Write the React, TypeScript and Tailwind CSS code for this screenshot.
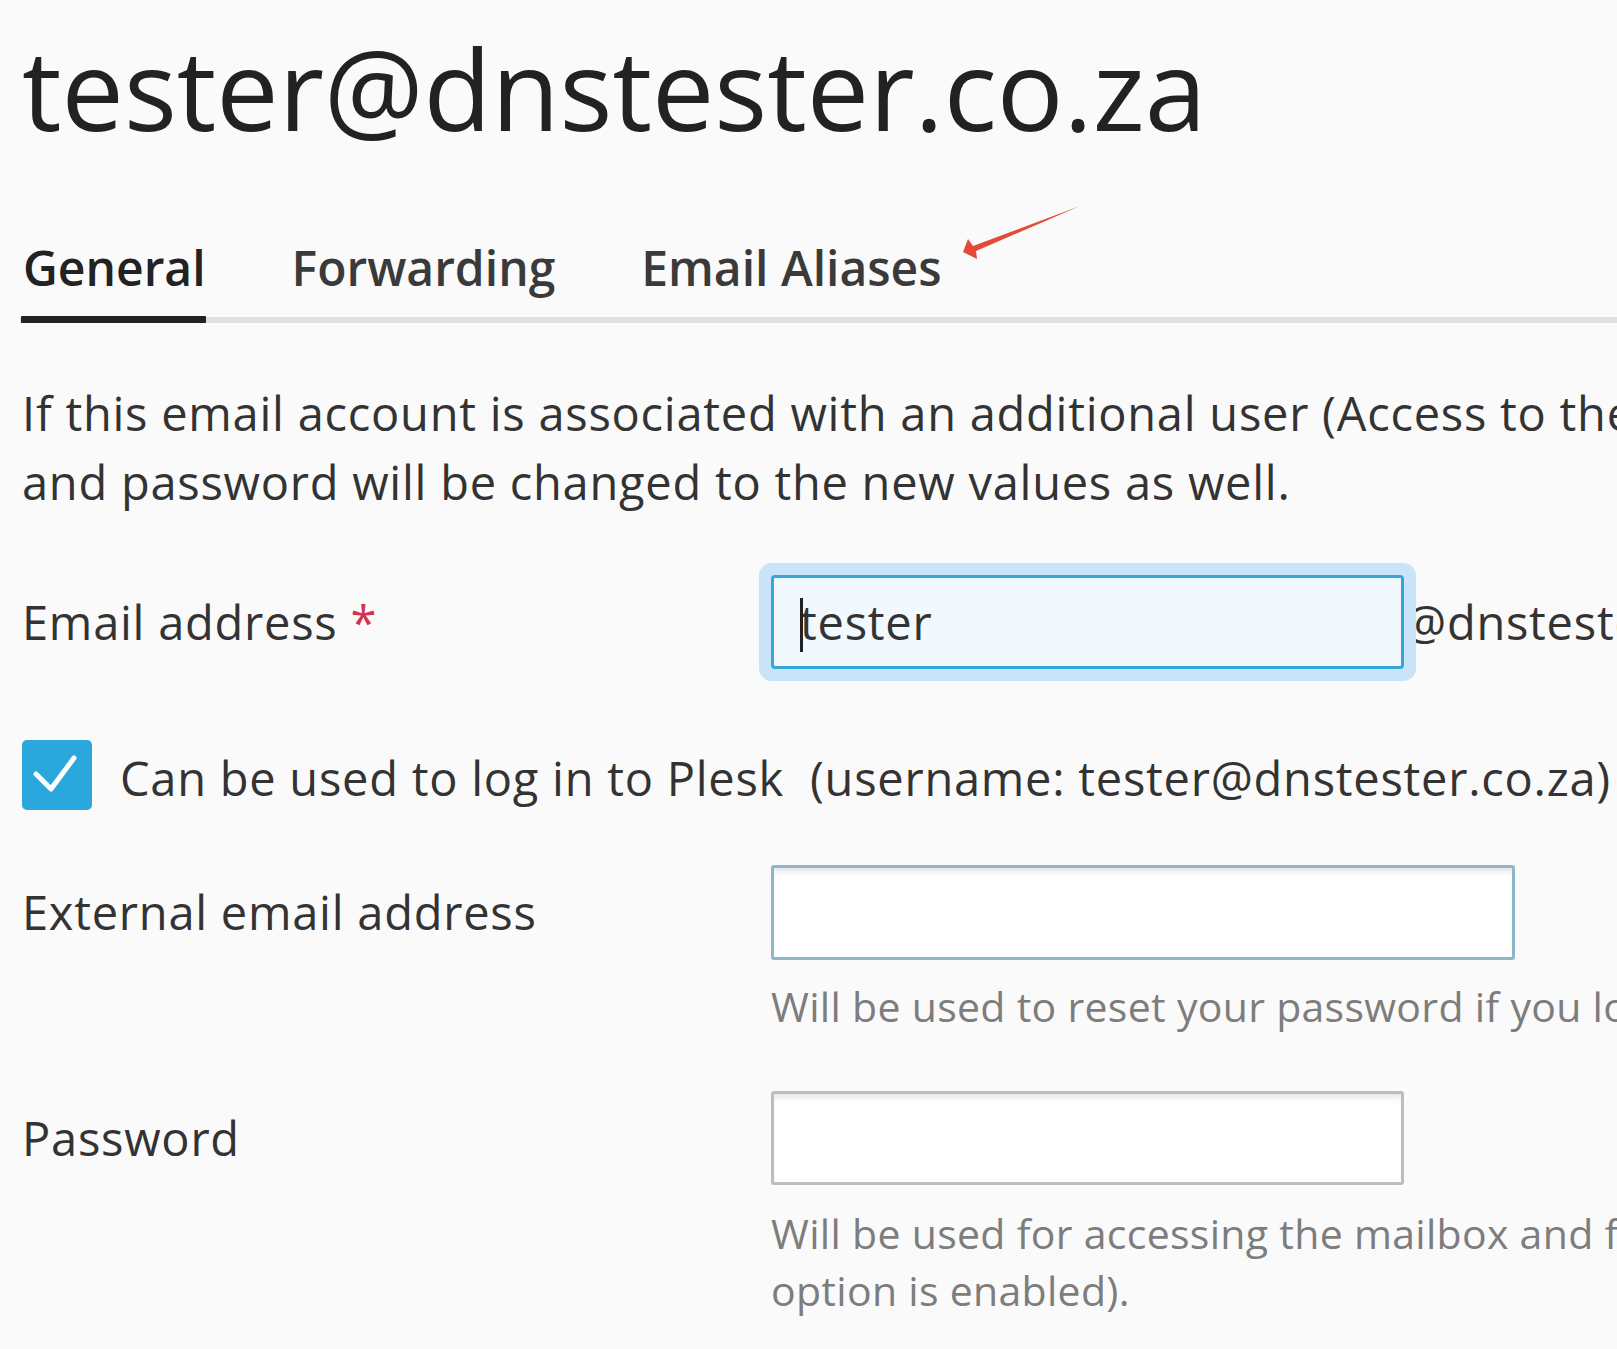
// Plesk mailbox settings — General tab (zoomed)

const TABS = [
  { id: "general", label: "General" },
  { id: "forwarding", label: "Forwarding" },
  { id: "aliases", label: "Email Aliases" },
];

function Tabs({ active }: { active: string }) {
  return (
    <div className="relative mt-[100px]">
      <div className="flex gap-[86px] pl-[1px]">
        {TABS.map((t) => {
          const isActive = t.id === active;
          return (
            <div key={t.id} className="relative">
              <span
                className={`block text-[48px] leading-none font-semibold pb-[24px] ${
                  isActive ? "text-[#222]" : "text-[#3a3a3a]"
                }`}
              >
                {t.label}
              </span>
              {isActive && <div className="absolute left-[-2px] right-0 bottom-[-7px] h-[7px] bg-[#222] rounded-[1px] z-10" />}
            </div>
          );
        })}
      </div>
      <div className="h-[6px] bg-[#e0e0e0] -mr-[22px] -ml-[2px] mt-[1px]" />
    </div>
  );
}

function FieldLabel({ children }: { children: React.ReactNode }) {
  return <div className="w-[749px] shrink-0 text-[47px] tracking-[0.75px] leading-[69px] text-[#333]">{children}</div>;
}

function Hint({ children }: { children: React.ReactNode }) {
  return <div className="ml-[749px] text-[41px] tracking-[0.3px] leading-[57px] text-[#7d7d7d] whitespace-nowrap">{children}</div>;
}

export default function App() {
  return (
    <div
      className="relative min-h-screen w-screen overflow-hidden bg-[#fafafa] pl-[22px] pt-[33px]"
      style={{ fontFamily: "'Open Sans', 'Noto Sans', sans-serif" }}
    >
      <h1 className="text-[111px] leading-none text-[#222] font-normal whitespace-nowrap">tester@dnstester.co.za</h1>

      <Tabs active="general" />

      {/* annotation arrow */}
      <svg className="absolute left-0 top-0 pointer-events-none" width="1617" height="400" viewBox="0 0 1617 400">
        <polygon points="963,252 968,239 973,246 1080,206 976,251 977,259" fill="#e34a38" />
      </svg>

      <p className="mt-[56px] text-[47px] tracking-[0.75px] leading-[69px] text-[#333] whitespace-nowrap">
        If this email account is associated with an additional user (Access to the Customer Panel option is enabled), the user's login
        <br />
        and password will be changed to the new values as well.
      </p>

      {/* Email address */}
      <div className="mt-[58px] flex items-center">
        <FieldLabel>
          Email address <span className="text-[#d3334b]">*</span>
        </FieldLabel>
        <div className="relative w-[633px] h-[94px] shrink-0 rounded-[4px] border-[3px] border-[#35a6dc] bg-[#f1f8fe] shadow-[0_0_0_12px_#c7e4f8] flex items-center pl-[26px]">
          <span className="absolute left-[26px] top-[20px] w-[3px] h-[54px] bg-[#222]" />
          <span className="text-[47px] tracking-[0.75px] leading-none text-[#333]">tester</span>
        </div>
        <span className="text-[47px] tracking-[0.75px] leading-none text-[#333] whitespace-nowrap">@dnstester.co.za</span>
      </div>

      {/* Login checkbox */}
      <div className="mt-[67px] flex items-center gap-[28px]">
        <div className="w-[70px] h-[70px] shrink-0 rounded-[5px] bg-[#2aa8de] flex items-center justify-center">
          <svg width="70" height="70" viewBox="0 0 70 70" fill="none">
            <path d="M14 34 L29 49 L52 18" stroke="#fff" strokeWidth="5" strokeLinecap="round" strokeLinejoin="round" />
          </svg>
        </div>
        <span className="text-[47px] tracking-[0.75px] leading-[69px] text-[#333] whitespace-nowrap pt-[8px]">
          Can be used to log in to Plesk&nbsp; (username: tester@dnstester.co.za)
        </span>
      </div>

      {/* External email */}
      <div className="mt-[52px] flex items-center">
        <FieldLabel>External email address</FieldLabel>
        <div className="w-[744px] h-[95px] shrink-0 rounded-[3px] border-[3px] border-[#8fb5c8] bg-white shadow-[inset_0_6px_6px_-3px_#e2e2e2]" />
      </div>
      <div className="mt-[18px]">
        <Hint>Will be used to reset your password if you lose it.</Hint>
      </div>

      {/* Password */}
      <div className="mt-[56px] flex items-center">
        <FieldLabel>Password</FieldLabel>
        <div className="w-[633px] h-[94px] shrink-0 rounded-[3px] border-[3px] border-[#bdbdbd] bg-white shadow-[inset_0_6px_6px_-3px_#e2e2e2]" />
      </div>
      <div className="mt-[20px]">
        <Hint>
          Will be used for accessing the mailbox and for logging in to Plesk (if the corresponding
          <br />
          option is enabled).
        </Hint>
      </div>
    </div>
  );
}
